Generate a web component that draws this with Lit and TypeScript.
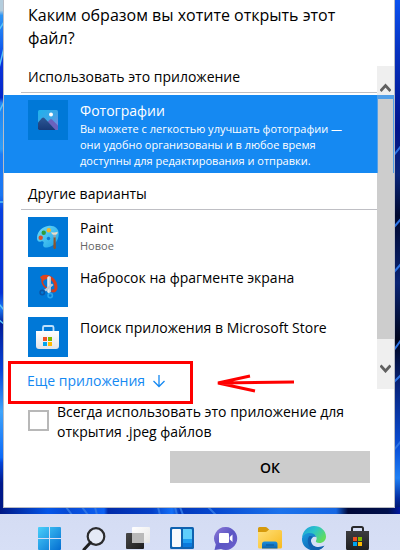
import { LitElement, html, css, svg, nothing } from "lit";
import type { TemplateResult } from "lit";
import { customElement, property, state } from "lit/decorators.js";
import { classMap } from "lit/directives/class-map.js";

interface AppItem {
  id: string;
  name: string;
  note?: string;
}

const recommended: AppItem = {
  id: "photos",
  name: "Фотографии",
  note: "Вы можете с легкостью улучшать фотографии — они удобно организованы и в любое время доступны для редактирования и отправки.",
};

const others: AppItem[] = [
  { id: "paint", name: "Paint", note: "Новое" },
  { id: "snip", name: "Набросок на фрагменте экрана" },
  { id: "store", name: "Поиск приложения в Microsoft Store" },
];

const appIcons: Record<string, TemplateResult> = {
  photos: svg`
    <defs>
      <linearGradient id="sky" x1="0" y1="0" x2="1" y2="1">
        <stop offset="0" stop-color="#1fb2ec" /><stop offset=".55" stop-color="#3fa4e6" /><stop offset="1" stop-color="#8d85dc" />
      </linearGradient>
      <linearGradient id="hill" x1="0" y1="0" x2="0" y2="1">
        <stop offset="0" stop-color="#2d5795" /><stop offset="1" stop-color="#173a78" />
      </linearGradient>
    </defs>
    <rect x="10" y="10" width="20" height="20" rx="1.5" fill="url(#sky)" />
    <path d="M18 23.5l4-4q1-1 2 0l6 6v3q0 1.500-1.500 1.500h-6z" fill="#6b62bd" />
    <path d="M10 22.500l4-4.500q1.200-1.200 2.400 0L27.500 30H11.500q-1.500 0-1.500-1.500z" fill="url(#hill)" />
    <circle cx="23" cy="14.500" r="2" fill="#fff" />`,
  paint: svg`
    <defs>
      <linearGradient id="palette" x1="0" y1="0" x2="1" y2="1">
        <stop offset="0" stop-color="#6fdcf8" /><stop offset="1" stop-color="#1ba3e8" />
      </linearGradient>
    </defs>
    <path d="M20 9C26 8 31 11.500 30.800 17C30.500 24 26 29.500 19 30.500C15.500 31 14.500 28.500 15.500 26.500C16.300 24.800 15 23.500 13 24.500C10.500 25.500 8.500 23.500 9 20C9.800 14 14.500 9.800 20 9z" fill="url(#palette)" />
    <circle cx="20.500" cy="21.500" r="1.700" fill="#0b7bd2" />
    <circle cx="20.800" cy="13.300" r="2.200" fill="#f0b62a" />
    <circle cx="15.700" cy="15.700" r="2.200" fill="#2f9c3a" />
    <circle cx="12.700" cy="20.700" r="2.200" fill="#d9512c" />
    <path d="M25.600 20h2l.3 10.500q-.2 1.700-1.200 1.700t-1.300-1.700z" fill="#8b552c" />
    <path d="M25.200 17.500h2.800l-.3 3h-2.200z" fill="#9aa5ae" />
    <path d="M23.200 15q3 1.200 6.600-.2-.1 2.400-1.800 3h-3q-1.500-.6-1.800-2.800z" fill="#ecdcc8" />`,
  snip: svg`
    <path d="M14 10.500q4.500-2.500 9 .5 5 3.500 5 10-.2 4-4.500 2.500" fill="none" stroke="#d43d1c" stroke-width="3" />
    <path d="M12 10q3-2.500 8-1.700l-1 3.700q-3 .2-4 2.500z" fill="#e0441c" />
    <path d="M14 12.500q0 6 5 9" fill="none" stroke="#d43d1c" stroke-width="1.600" />
    <path d="M19.200 10.500q1.800-2.500 3.600 0v14l-1 2h-1.600l-1-2z" fill="#dfe5eb" />
    <path d="M21.500 9.200q1.300.6 1.300 1.300v14l-1.300 1z" fill="#b5c3cf" />
    <path d="M16 23l8-6.500 1.500 1.500-7.500 6.500z" fill="#b9cad8" />
    <circle cx="14.300" cy="25.600" r="2.200" fill="none" stroke="#0b55a5" stroke-width="1.600" />
    <circle cx="22.200" cy="28.600" r="2.200" fill="none" stroke="#2aa5ee" stroke-width="1.600" />`,
  store: svg`
    <defs>
      <linearGradient id="bag" x1="0" y1="0" x2="0" y2="1">
        <stop offset="0" stop-color="#fff" /><stop offset="1" stop-color="#e2e4e8" />
      </linearGradient>
    </defs>
    <path d="M15 15v-4.500q0-1.500 1.500-1.500h7.500q1.500 0 1.500 1.500V15" fill="none" stroke="#bfe0fb" stroke-width="1.800" />
    <path d="M8 14h23v15q0 3-3 3H11q-3 0-3-3z" fill="url(#bag)" />
    <path d="M15 20h4v4h-4z" fill="#f25022" /><path d="M20 20h4v4h-4z" fill="#7fba00" />
    <path d="M15 25h4v4h-4z" fill="#00a4ef" /><path d="M20 25h4v4h-4z" fill="#ffb900" />`,
};

const taskbarIcons: { label: string; art: TemplateResult }[] = [
  {
    label: "Пуск",
    art: svg`
      <defs><linearGradient id="win" gradientUnits="userSpaceOnUse" x1="0" y1="0" x2="24" y2="24">
        <stop offset="0" stop-color="#49cffa" /><stop offset="1" stop-color="#0069cf" />
      </linearGradient></defs>
      <path d="M0 1q0-1 1-1h10v11H0zM12 0h10q1 0 1 1v10H12zM0 12h11v11H1q-1 0-1-1zM12 12h11v10q0 1-1 1H12z" fill="url(#win)" />`,
  },
  {
    label: "Поиск",
    art: svg`
      <circle cx="14" cy="9.500" r="8.300" fill="#e5eaf6" stroke="#2b2b2d" stroke-width="2.200" />
      <path d="M8.500 15.500L2 22.500" stroke="#1e1e20" stroke-width="3" stroke-linecap="round" />`,
  },
  {
    label: "Представление задач",
    art: svg`
      <defs>
        <linearGradient id="back" x1="0" y1="0" x2="1" y2="1"><stop offset="0" stop-color="#484848" /><stop offset="1" stop-color="#1c1c1c" /></linearGradient>
        <linearGradient id="front" x1="0" y1="0" x2="1" y2="1"><stop offset="0" stop-color="#fff" /><stop offset="1" stop-color="#e6e6e6" /></linearGradient>
      </defs>
      <rect x="0" y="6" width="18" height="16" rx="1" fill="url(#back)" />
      <rect x="6" y="0" width="18" height="16" rx="1" fill="url(#front)" />
      <path d="M6 6h12v10H7q-1 0-1-1z" fill="#b9b9b9" />`,
  },
  {
    label: "Мини-приложения",
    art: svg`
      <rect x="0" y="0" width="24" height="22" rx="1.500" fill="#0f62b0" />
      <rect x="2" y="2" width="9" height="18" rx="1" fill="#f8fafc" />
      <path d="M13 2h8q1 0 1 1v9h-9z" fill="#5fcefb" />
      <path d="M13 12h9v4h-9z" fill="#1d9df0" /><path d="M13 16h9v3q0 1-1 1h-8z" fill="#0a79dc" />`,
  },
  {
    label: "Чат",
    art: svg`
      <defs><linearGradient id="chat" x1="0" y1="0" x2="1" y2="1">
        <stop offset="0" stop-color="#8f7ad8" /><stop offset=".5" stop-color="#5b56c4" /><stop offset="1" stop-color="#6a5fcd" />
      </linearGradient></defs>
      <path d="M12 0a11.500 11.500 0 1 1-5 22L.500 23l1.300-5.500A11.500 11.500 0 0 1 12 0z" fill="url(#chat)" />
      <rect x="5" y="6" width="10" height="10" rx="1.200" fill="#fff" />
      <path d="M15.800 10l2.700-2.500v7.500l-2.700-2.500z" fill="#fff" />`,
  },
  {
    label: "Проводник",
    art: svg`
      <defs>
        <linearGradient id="folder" x1="0" y1="0" x2="1" y2="1"><stop offset="0" stop-color="#ffe07a" /><stop offset="1" stop-color="#f7b91c" /></linearGradient>
        <linearGradient id="pocket" x1="0" y1="0" x2="0" y2="1"><stop offset="0" stop-color="#1a8fe0" /><stop offset="1" stop-color="#0f62a8" /></linearGradient>
      </defs>
      <path d="M0 1.500Q0 0 1.500 0h6q1 0 1.700.8L11.500 3l-3 3H0z" fill="#d69a0c" />
      <path d="M0 5h7.500q1 0 1.700-.8L10.500 3h12Q24 3 24 4.500V20q0 1.500-1.500 1.500h-21Q0 21.500 0 20z" fill="url(#folder)" />
      <path d="M4 21.500V17q0-2.500 2.500-2.500h10.500q2.500 0 2.500 2.500v4.500z" fill="url(#pocket)" />
      <path d="M8 18h8" stroke="#0d5a9c" stroke-width="1.200" />`,
  },
  {
    label: "Microsoft Edge",
    art: svg`
      <defs>
        <linearGradient id="edgeTop" x1="0" y1="0" x2="1" y2=".6"><stop offset="0" stop-color="#1c9be0" /><stop offset=".5" stop-color="#2cc4c8" /><stop offset="1" stop-color="#62dd5c" /></linearGradient>
        <linearGradient id="edgeLow" x1="0" y1="0" x2="1" y2="1"><stop offset="0" stop-color="#1b9de2" /><stop offset="1" stop-color="#0c4f9e" /></linearGradient>
      </defs>
      <path d="M0 11C.500 4 5.500-1 12-1c7 0 12 5 12 10.500 0 4-3 6.500-6.500 6.500-3 0-4.200-1.200-3.500-2.300 1.500-2.200.5-5.700-3-6.200C6.500 7 1 8 0 11z" fill="url(#edgeTop)" />
      <path d="M0 11.500C.500 8.500 3.500 6 7.500 6c3.500 0 6 1.500 6.800 4-3.800-1.200-5.800 1.500-5.300 4.500.6 4 4.500 6.500 8.500 6 2-.2 3.500-1 4.800-1.700C20 22 16.500 23.500 12 23.500 5 23.500-.500 18 0 11.500z" fill="url(#edgeLow)" />
      <path d="M7.500 9C4.500 12 5 20.500 12.500 23.400 18 23.500 21 21 22.500 18.600c-5.500 2.900-13 1.400-13.500-4.100-.2-2 .5-3.700 2-4.500q-1.500-1.500-3.500-1z" fill="#1260b0" />`,
  },
  {
    label: "Microsoft Store",
    art: svg`
      <defs><linearGradient id="darkBag" x1="0" y1="0" x2="0" y2="1"><stop offset="0" stop-color="#3d3d3f" /><stop offset="1" stop-color="#1f1f21" /></linearGradient></defs>
      <path d="M6 6V1.500Q6 0 7.500 0h8Q17 0 17 1.500V6" fill="none" stroke="#29292b" stroke-width="2" />
      <path d="M0 4h23v17q0 2.500-2.500 2.500h-18Q0 23.500 0 21z" fill="url(#darkBag)" />
      <path d="M7 10h4v4H7z" fill="#f25022" /><path d="M12 10h4v4h-4z" fill="#7fba00" />
      <path d="M7 15h4v4H7z" fill="#00a4ef" /><path d="M12 15h4v4h-4z" fill="#ffb900" />`,
  },
];

@customElement("desktop-wallpaper")
export class DesktopWallpaper extends LitElement {
  static styles = css`
    :host { display: block; }
    svg { display: block; width: 100%; height: 100%; }
  `;
  render() {
    return html`<svg viewBox="0 0 400 514" preserveAspectRatio="none" aria-hidden="true">
      <defs>
        <linearGradient id="left" x1="0" y1="0" x2="0" y2="1">
          <stop offset="0" stop-color="#b4cddd" /><stop offset=".02" stop-color="#b4cddd" />
          <stop offset=".03" stop-color="#2d95f5" /><stop offset=".09" stop-color="#1260ee" />
          <stop offset=".12" stop-color="#0a34dc" /><stop offset=".19" stop-color="#0526c8" />
          <stop offset=".2" stop-color="#2385f5" /><stop offset=".21" stop-color="#1f86f4" />
          <stop offset=".29" stop-color="#2c9cf8" /><stop offset=".3" stop-color="#1b7cf6" />
          <stop offset=".38" stop-color="#1a76f2" /><stop offset=".41" stop-color="#0740e0" />
          <stop offset=".57" stop-color="#0330d4" /><stop offset=".6" stop-color="#1c78f2" />
          <stop offset=".63" stop-color="#021c98" /><stop offset=".72" stop-color="#0844d8" />
          <stop offset=".8" stop-color="#3fa4fa" /><stop offset=".89" stop-color="#0c6af8" />
          <stop offset=".9" stop-color="#0344d8" /><stop offset=".94" stop-color="#00188c" /><stop offset="1" stop-color="#001784" />
        </linearGradient>
        <linearGradient id="right" x1="0" y1="0" x2="0" y2="1">
          <stop offset="0" stop-color="#0b52f0" /><stop offset=".1" stop-color="#0732c0" />
          <stop offset=".25" stop-color="#00138c" /><stop offset=".34" stop-color="#0a2578" />
          <stop offset=".42" stop-color="#00082e" /><stop offset=".55" stop-color="#0a2474" />
          <stop offset=".66" stop-color="#00051c" /><stop offset=".75" stop-color="#08247c" />
          <stop offset=".87" stop-color="#0a4fd8" /><stop offset=".93" stop-color="#1f80f4" />
          <stop offset=".97" stop-color="#032ba0" /><stop offset="1" stop-color="#000f54" />
        </linearGradient>
        <linearGradient id="low">
          <stop offset="0" stop-color="#001784" /><stop offset=".12" stop-color="#0456e8" />
          <stop offset=".17" stop-color="#0749d4" /><stop offset=".26" stop-color="#0d62f4" />
          <stop offset=".27" stop-color="#012aa8" /><stop offset=".38" stop-color="#0440c8" />
          <stop offset=".43" stop-color="#1470f8" /><stop offset=".45" stop-color="#0238bc" />
          <stop offset=".54" stop-color="#0649d0" /><stop offset=".7" stop-color="#1b72ec" />
          <stop offset=".84" stop-color="#1668e4" /><stop offset=".87" stop-color="#000838" />
          <stop offset=".97" stop-color="#00104c" /><stop offset="1" stop-color="#0018a0" />
        </linearGradient>
      </defs>
      <rect width="200" height="514" fill="url(#left)" />
      <rect x="200" width="200" height="514" fill="url(#right)" />
      <rect x="0" y="507" width="400" height="7" fill="url(#low)" />
      <g fill="none" stroke="#2e74e4" stroke-width="2">
        <path d="M394 155l7-9M394 227l7-8M394 272l7-8M394 350l7-10M394 382l7-7M394 450l7-9" />
        <path d="M66 507l6 8M82 507l6 8M95 507l2 8M158 507l2 8M175 507l2 8M180 507l3 8M208 507l8 8" />
      </g>
      <path d="M-1 30l5-8M-1 68l5-20M-1 112l5-10M-1 202h5M-1 304l5 6M-1 320l5 4" fill="none" stroke="#58c4fa" stroke-width="1.500" />
    </svg>`;
  }
}

@customElement("app-option")
export class AppOption extends LitElement {
  @property({ attribute: false }) item!: AppItem;
  @property({ type: Boolean }) selected = false;
  static styles = css`
    :host { display: block; }
    .option {
      display: flex;
      align-items: flex-start;
      gap: 12px;
      width: 100%;
      box-sizing: border-box;
      margin: 0;
      padding: 5px 12px 5px 24px;
      border: 0;
      background: transparent;
      color: #000;
      font: inherit;
      text-align: left;
    }
    .selected { background: #1589f2; color: #fff; padding-bottom: 4px; }
    .tile { flex: none; width: 40px; height: 40px; background: #0078d7; }
    .texts { display: flex; flex-direction: column; min-width: 0; }
    .name { line-height: 21px; }
    .note { font-size: 11px; line-height: 16px; color: #666; }
    .selected .note { color: #fff; }
  `;
  render() {
    const { id, name, note } = this.item;
    return html`<button type="button" class=${classMap({ option: true, selected: this.selected })} aria-pressed=${this.selected}>
      <svg class="tile" viewBox="0 0 40 40" aria-hidden="true">${appIcons[id]}</svg>
      <span class="texts">
        <span class="name">${name}</span>
        ${note ? html`<span class="note">${note}</span>` : nothing}
      </span>
    </button>`;
  }
}

@customElement("app-root")
export class AppRoot extends LitElement {
  @state() private chosen = "photos";

  static styles = css`
    :host {
      display: block;
      font-family: "Open Sans", "Noto Sans", sans-serif;
      font-size: 14px;
      color: #000;
    }
    .desktop { position: relative; padding: 0 5px 6px 3px; }
    .wallpaper { position: absolute; inset: 0; }
    .dialog {
      position: relative;
      background: #fff;
      border: 1px solid #b9bcc4;
      border-top: 0;
      padding: 4px 0 24px;
    }
    .title { margin: 0 24px 16px; font-size: 16px; font-weight: 400; line-height: 23px; }
    .viewport { display: flex; }
    .list { flex: 1; min-width: 0; }
    .section {
      margin: 0 0 2px 17px;
      padding: 0 0 4px 7px;
      border-bottom: 1px solid #bfbfc4;
      font-size: 14px;
      font-weight: 400;
      line-height: 22px;
    }
    .recommended { margin-bottom: 10px; }
    .more {
      display: flex;
      align-items: center;
      gap: 8px;
      padding: 11px 24px 0 23px;
      color: #1589f2;
      line-height: 16px;
      text-decoration: none;
    }
    .more svg { width: 12px; height: 14px; }
    .scrollbar { display: flex; flex-direction: column; width: 17px; background: #cdcdcd; }
    .step {
      display: flex;
      justify-content: center;
      border: 0;
      margin: 0;
      padding: 0;
      background: #efefef;
    }
    .step svg { width: 11px; height: 9px; }
    .up { height: 29px; align-items: flex-end; padding-bottom: 3px; }
    .down { height: 50px; align-items: center; padding-top: 8px; }
    .thumb { flex: 1; border-top: 4px solid #529fe8; }
    .edge { height: 74px; border: solid #529fe8; border-width: 0 1px; }
    .always {
      display: flex;
      align-items: flex-start;
      gap: 8px;
      margin: 13px 48px 9px 24px;
      line-height: 20px;
    }
    .always span { min-width: 0; }
    .always input {
      appearance: none;
      flex: none;
      width: 21px;
      height: 21px;
      margin: 8px 0 0;
      border: 2px solid #b8b8b8;
      background: #fff;
    }
    .actions { display: flex; justify-content: flex-end; padding: 0 24px; }
    .ok {
      width: 200px;
      height: 32px;
      border: 0;
      padding: 0;
      background: #ccc;
      color: #000;
      font: inherit;
      font-weight: 600;
    }
    .frame {
      position: absolute;
      left: 4px;
      top: 361px;
      width: 185px;
      height: 43px;
      box-sizing: border-box;
      border: 3px solid #f00;
      pointer-events: none;
    }
    .pointer { position: absolute; left: 212px; top: 374px; width: 80px; height: 20px; pointer-events: none; }
    .taskbar {
      display: flex;
      gap: 20px;
      height: 36px;
      box-sizing: border-box;
      padding: 13px 32px 0 38px;
      overflow: hidden;
      background: linear-gradient(#d4dcf3, #d7dff6);
    }
    .task { flex: none; width: 24px; height: 24px; padding: 0; border: 0; background: none; }
    .task svg { display: block; width: 24px; height: 24px; overflow: visible; }
  `;

  render() {
    return html`
      <main class="desktop">
        <desktop-wallpaper class="wallpaper"></desktop-wallpaper>
        <section class="dialog" role="dialog" aria-labelledby="title">
          <h1 class="title" id="title">Каким образом вы хотите открыть этот файл?</h1>
          <div class="viewport">
            <div class="list">
              <h2 class="section">Использовать это приложение</h2>
              <app-option
                class="recommended"
                .item=${recommended}
                ?selected=${this.chosen === recommended.id}
                @click=${() => (this.chosen = recommended.id)}
              ></app-option>
              <h2 class="section">Другие варианты</h2>
              ${others.map(
                (item) => html`<app-option
                  .item=${item}
                  ?selected=${this.chosen === item.id}
                  @click=${() => (this.chosen = item.id)}
                ></app-option>`
              )}
              <a class="more" href="#more">
                Еще приложения
                <svg viewBox="0 0 12 14" fill="none" stroke="currentColor" stroke-width="1.300" aria-hidden="true">
                  <path d="M6 1v11.500M.500 7L6 12.500 11.500 7" />
                </svg>
              </a>
            </div>
            <div class="scrollbar">
              <button class="step up" type="button" aria-label="Вверх">
                <svg viewBox="0 0 11 9" fill="none" stroke="#606060" stroke-width="2.800"><path d="M.500 8L5.500 2.500 10.500 8" /></svg>
              </button>
              <div class="thumb"><div class="edge"></div></div>
              <button class="step down" type="button" aria-label="Вниз">
                <svg viewBox="0 0 11 9" fill="none" stroke="#606060" stroke-width="2.800"><path d="M.500 1.500L5.500 7 10.500 1.500" /></svg>
              </button>
            </div>
          </div>
          <label class="always">
            <input type="checkbox" />
            <span>Всегда использовать это приложение для открытия .jpeg файлов</span>
          </label>
          <div class="actions"><button class="ok" type="button">ОК</button></div>
          <div class="frame"></div>
          <svg class="pointer" viewBox="0 0 80 20" fill="none" stroke="#f00" stroke-width="3" aria-hidden="true">
            <path d="M3 9L78 8M34 2L2 9 39 17" />
          </svg>
        </section>
      </main>
      <nav class="taskbar">
        ${taskbarIcons.map(
          (t) => html`<button class="task" type="button" aria-label=${t.label}>
            <svg viewBox="0 0 24 24" aria-hidden="true">${t.art}</svg>
          </button>`
        )}
      </nav>
    `;
  }
}
